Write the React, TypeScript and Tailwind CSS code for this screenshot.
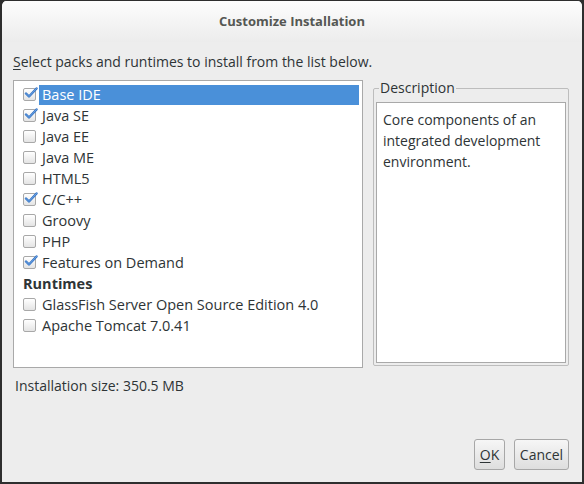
import React from "react";

const font = { fontFamily: '"Open Sans", "DejaVu Sans", sans-serif' };

function Check({ checked }: { checked: boolean }) {
  return (
    <span className="relative inline-block w-[13px] h-[13px] shrink-0">
      <span className="absolute inset-0 rounded-[2px] border border-[#a8a8a8] bg-gradient-to-b from-[#ffffff] to-[#e4e4e4]" />
      {checked && (
        <svg className="absolute left-[1px] top-[-2px]" width="14" height="14" viewBox="0 0 14 14">
          <path d="M2 7.5 L5 10.5 L12.5 2.5" fill="none" stroke="#3474c6" strokeWidth="2.4" strokeLinecap="round" strokeLinejoin="round" />
          <path d="M2 7.5 L5 10.5 L12.5 2.5" fill="none" stroke="#7fb0ea" strokeWidth="0.8" strokeLinecap="round" strokeLinejoin="round" />
        </svg>
      )}
    </span>
  );
}

const items: { label: string; checked?: boolean; selected?: boolean; header?: boolean }[] = [
  { label: "Base IDE", checked: true, selected: true },
  { label: "Java SE", checked: true },
  { label: "Java EE" },
  { label: "Java ME" },
  { label: "HTML5" },
  { label: "C/C++", checked: true },
  { label: "Groovy" },
  { label: "PHP" },
  { label: "Features on Demand", checked: true },
  { label: "Runtimes", header: true },
  { label: "GlassFish Server Open Source Edition 4.0" },
  { label: "Apache Tomcat 7.0.41" },
];

export default function App() {
  return (
    <div className="w-[584px] h-[484px] bg-[#2e2e2e] overflow-hidden" style={font}>
      <div className="w-[584px] h-[484px] border-x-[2px] border-b-[2px] border-t border-[#2e2e2e] rounded-t-[6px] bg-[#ededed] flex flex-col text-[14px] text-[#2e3436] overflow-hidden">
        {/* title bar */}
        <div className="h-[41px] shrink-0 flex items-center justify-center bg-gradient-to-b from-[#fdfdfd] to-[#ececec] rounded-t-[5px]">
          <span className="font-bold text-[#555753] text-[13px] mt-[1px]">Customize Installation</span>
        </div>
        <div className="flex flex-col flex-1 pl-[11px] pr-[13px]">
          <div className="h-[20px] mt-[10px] leading-[20px]">
            <span className="underline underline-offset-2">S</span>elect packs and runtimes to install from the list below.
          </div>
          <div className="flex mt-[8px] gap-[10px]">
            <div className="w-[350px] h-[288px] bg-white border border-[#a9a9a9] pt-[3px] pl-[9px] pr-[3px] text-[14.5px]">
              {items.map((it) =>
                it.header ? (
                  <div key={it.label} className="h-[21px] flex items-center font-bold">
                    {it.label}
                  </div>
                ) : (
                  <div key={it.label} className="h-[21px] flex items-center">
                    <Check checked={!!it.checked} />
                    <span
                      className={
                        it.selected
                          ? "ml-[3px] flex-1 h-[20px] pl-[3px] flex items-center bg-[#4a90d9] text-white"
                          : "ml-[3px] pl-[3px]"
                      }
                    >
                      {it.label}
                    </span>
                  </div>
                )
              )}
            </div>
            <div className="relative mt-[8px] w-[196px] h-[278px] border border-[#bdbdbd] rounded-[2px] px-[2px] pt-[13px] pb-[2px]">
              <span className="absolute left-[5px] top-[-11px] px-[1px] bg-[#ededed] leading-[20px]">Description</span>
              <div className="h-full bg-white border border-[#a9a9a9] px-[6px] pt-[6px] leading-[21px]">
                Core components of an
                <br />
                integrated development
                <br />
                environment.
              </div>
            </div>
          </div>
          <div className="mt-[8px] h-[20px] leading-[20px] pl-[2px] text-[14px]">Installation size: 350.5 MB</div>
          <div className="flex justify-end gap-[9px] mt-[43px]">
            <button className="h-[31px] w-[31px] rounded-[3px] border border-[#a7a7a7] bg-gradient-to-b from-[#f6f6f6] to-[#dedede] text-[14px] text-[#2e3436]">
              <span className="underline underline-offset-2">O</span>K
            </button>
            <button className="h-[31px] w-[55px] rounded-[3px] border border-[#a7a7a7] bg-gradient-to-b from-[#f6f6f6] to-[#dedede] text-[14px] text-[#2e3436]">
              Cancel
            </button>
          </div>
        </div>
      </div>
    </div>
  );
}
